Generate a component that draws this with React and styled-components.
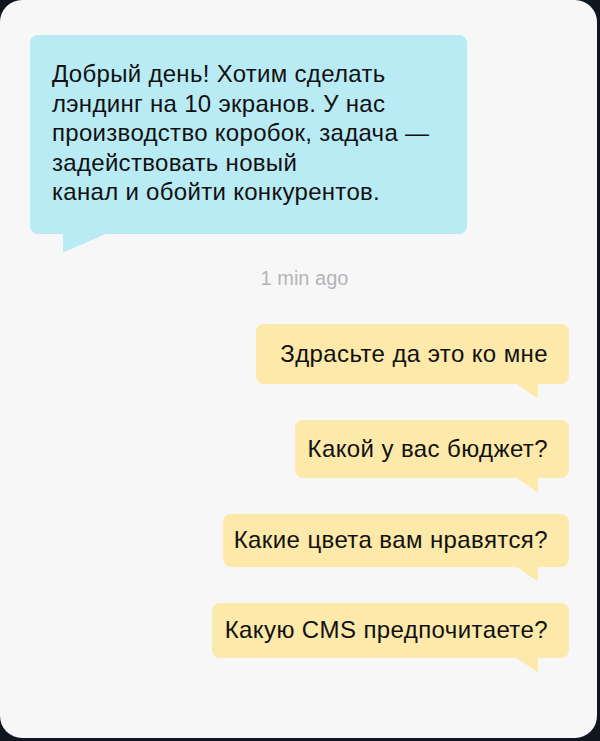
import styled, { createGlobalStyle } from "styled-components";

const Global = createGlobalStyle`
  html, body {
    margin: 0;
    padding: 0;
    background: #0f1620;
  }
  body {
    font-family: "Liberation Sans", Arial, sans-serif;
  }
`;

const Card = styled.div`
  width: 597px;
  height: 738px;
  box-sizing: border-box;
  background: #f7f7f8;
  border-radius: 22px;
  padding: 35px 28px 0 30px;
  display: flex;
  flex-direction: column;
`;

const Incoming = styled.div`
  position: relative;
  width: 437px;
  box-sizing: border-box;
  padding: 24px 20px 27px 22px;
  background: #b9ebf5;
  border-radius: 8px;
  color: #111;
  font-size: 24px;
  line-height: 29.5px;
  letter-spacing: 0.3px;
  white-space: nowrap;

  &::after {
    content: "";
    position: absolute;
    left: 33px;
    top: 100%;
    width: 44px;
    height: 19px;
    background: #b9ebf5;
    clip-path: polygon(0 0, 100% 0, 0 100%);
  }
`;

const Stamp = styled.div`
  margin-top: 33px;
  padding-left: 10px;
  text-align: center;
  color: #b4b4b8;
  font-size: 20px;
  line-height: 22px;
`;

const Outgoing = styled.div`
  display: flex;
  flex-direction: column;
  align-items: flex-end;
  gap: 36px;
  margin-top: 35px;
`;

const Bubble = styled.div`
  position: relative;
  width: ${(p) => p.$w}px;
  height: ${(p) => p.$h}px;
  box-sizing: border-box;
  padding-right: 21px;
  background: #fde9a9;
  border-radius: 8px;
  display: flex;
  align-items: center;
  justify-content: flex-end;
  color: #111;
  font-size: 24px;
  letter-spacing: 0.4px;
  white-space: nowrap;

  &::after {
    content: "";
    position: absolute;
    right: 31px;
    top: 100%;
    width: 22px;
    height: 15px;
    background: #fde9a9;
    clip-path: polygon(0 0, 100% 0, 100% 100%);
  }
`;

const replies = [
  { text: "Здрасьте да это ко мне", w: 313, h: 60 },
  { text: "Какой у вас бюджет?", w: 274, h: 58 },
  { text: "Какие цвета вам нравятся?", w: 346, h: 53 },
  { text: "Какую CMS предпочитаете?", w: 357, h: 55 },
];

export default function App() {
  return (
    <>
      <Global />
      <Card>
        <Incoming>
          Добрый день! Хотим сделать
          <br />
          лэндинг на 10 экранов. У нас
          <br />
          производство коробок, задача —
          <br />
          задействовать новый
          <br />
          канал и обойти конкурентов.
        </Incoming>
        <Stamp>1 min ago</Stamp>
        <Outgoing>
          {replies.map((r) => (
            <Bubble key={r.text} $w={r.w} $h={r.h}>
              {r.text}
            </Bubble>
          ))}
        </Outgoing>
      </Card>
    </>
  );
}
